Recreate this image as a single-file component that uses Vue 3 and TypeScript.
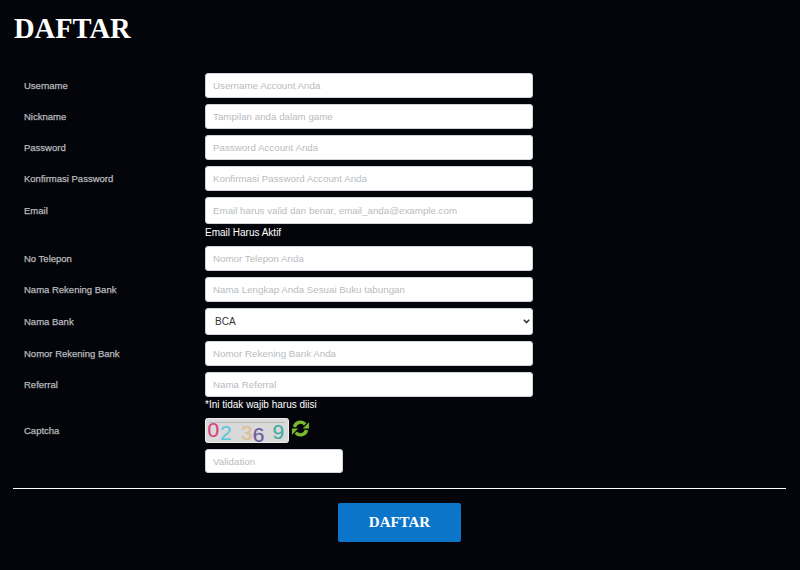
<script setup lang="ts">
import { ref } from "vue";

type Row = { label: string; placeholder: string; note?: string; tall?: boolean };

const topRows: Row[] = [
  { label: "Username", placeholder: "Username Account Anda" },
  { label: "Nickname", placeholder: "Tampilan anda dalam game" },
  { label: "Password", placeholder: "Password Account Anda" },
  { label: "Konfirmasi Password", placeholder: "Konfirmasi Password Account Anda" },
  { label: "Email", placeholder: "Email harus valid dan benar, email_anda@example.com", note: "Email Harus Aktif", tall: true },
  { label: "No Telepon", placeholder: "Nomor Telepon Anda" },
  { label: "Nama Rekening Bank", placeholder: "Nama Lengkap Anda Sesuai Buku tabungan" },
];

const bottomRows: Row[] = [
  { label: "Nomor Rekening Bank", placeholder: "Nomor Rekening Bank Anda" },
  { label: "Referral", placeholder: "Nama Referral", note: "*Ini tidak wajib harus diisi" },
];

const bank = ref("BCA");
const banks = ["BCA", "BNI", "BRI", "MANDIRI"];

const digits = [
  { ch: "0", x: 2.5, y: 19, color: "#d8427f" },
  { ch: "2", x: 15, y: 22, color: "#5fc6dd" },
  { ch: "3", x: 36, y: 22, color: "#dcc193" },
  { ch: "6", x: 47.8, y: 24, color: "#6f5a9c" },
  { ch: "9", x: 67.5, y: 21, color: "#42aca3" },
];
</script>

<template>
  <div class="page">
    <h1 class="title">DAFTAR</h1>

    <form class="form" @submit.prevent>
      <div v-for="row in topRows" :key="row.label" class="row">
        <label class="label" :class="{ 'label-tall': row.tall }">{{ row.label }}</label>
        <div class="field">
          <input class="input" :class="{ 'input-tall': row.tall }" type="text" :placeholder="row.placeholder" />
          <p v-if="row.note" class="note note-email">{{ row.note }}</p>
        </div>
      </div>

      <div class="row">
        <label class="label label-tall">Nama Bank</label>
        <div class="field select-wrap">
          <select v-model="bank" class="input input-tall select">
            <option v-for="b in banks" :key="b">{{ b }}</option>
          </select>
          <!-- native arrow is too big at this size -->
          <svg class="chevron" width="7" height="5" viewBox="0 0 7 5" fill="none">
            <path d="M0.8 0.8L3.5 3.6L6.2 0.8" stroke="#333" stroke-width="1.5" />
          </svg>
        </div>
      </div>

      <div v-for="row in bottomRows" :key="row.label" class="row">
        <label class="label">{{ row.label }}</label>
        <div class="field">
          <input class="input" type="text" :placeholder="row.placeholder" />
          <p v-if="row.note" class="note">{{ row.note }}</p>
        </div>
      </div>

      <div class="row row-captcha">
        <label class="label">Captcha</label>
        <div class="field captcha">
          <svg class="captcha-img" width="84" height="25" viewBox="0 0 84 25">
            <rect x="0.5" y="0.5" width="83" height="24" rx="2" fill="#d9d9d9" stroke="#eee" />
            <path d="M4 4.5H80" stroke="#a9a9a9" stroke-width="0.7" />
            <text
              v-for="d in digits"
              :key="d.ch"
              :x="d.x"
              :y="d.y"
              :fill="d.color"
              :stroke="d.color"
              class="captcha-digit"
            >{{ d.ch }}</text>
          </svg>
          <svg class="refresh" width="19" height="19" viewBox="0 0 20 20" fill="none">
            <path d="M3.6 8.4A6.6 6.6 0 0 1 15 5.6" stroke="#7cb82c" stroke-width="3.6" />
            <path d="M19 3.4V10H12.4Z" fill="#7cb82c" />
            <path d="M16.4 11.6A6.6 6.6 0 0 1 5 14.4" stroke="#7cb82c" stroke-width="3.6" />
            <path d="M1 16.6V10H7.6Z" fill="#7cb82c" />
          </svg>
        </div>
      </div>

      <div class="row">
        <span class="label"></span>
        <div class="field">
          <input class="input input-short" type="text" placeholder="Validation" />
        </div>
      </div>

      <hr class="divider" />

      <div class="actions">
        <button class="submit" type="submit">DAFTAR</button>
      </div>
    </form>
  </div>
</template>

<style>
html,
body {
  margin: 0;
  background: #04050a;
}
</style>

<style scoped>
.page {
  box-sizing: border-box;
  height: 570px;
  padding: 12px 14px 0 13px;
  background: #04050a;
  font-family: "Liberation Sans", Arial, sans-serif;
  overflow: hidden;
}

.title {
  margin: 0 0 26px 1px;
  font-family: "Liberation Serif", "Times New Roman", serif;
  font-size: 28.5px;
  line-height: 33px;
  font-weight: 700;
  color: #fff;
}

.form {
  margin-top: 28px;
}

.row {
  display: flex;
  margin-bottom: 6px;
}

.label {
  flex: 0 0 192px;
  box-sizing: border-box;
  height: 25px;
  padding-left: 11px;
  font-size: 9.5px;
  font-weight: 400;
  line-height: 25px;
  color: #b8babe;
  -webkit-text-stroke: 0.25px #b8babe;
}

.label-tall {
  height: 27px;
  line-height: 27px;
}

.field {
  width: 328px;
}

.input {
  display: block;
  box-sizing: border-box;
  width: 100%;
  height: 25px;
  padding: 0 7px;
  border: 1px solid #ced4da;
  border-radius: 3px;
  background: #fff;
  font-family: inherit;
  font-size: 9.75px;
  color: #333;
  outline: none;
}

.input::placeholder {
  color: #b9bcc0;
  opacity: 1;
}

.input-tall {
  height: 27px;
}

.select-wrap {
  position: relative;
}

.select {
  appearance: none;
  font-size: 10px;
  padding-left: 9px;
}

.chevron {
  position: absolute;
  top: 11px;
  right: 3px;
  pointer-events: none;
}

.input-short {
  width: 138px;
  height: 24px;
}

.note {
  margin: 0;
  padding-top: 1px;
  font-size: 10px;
  line-height: 13px;
  color: #fff;
}

.note-email {
  margin: 1px 0 1px;
}

.row-captcha {
  padding-top: 1px;
}

.captcha {
  display: flex;
  align-items: flex-start;
  gap: 2px;
}

.captcha-img {
  overflow: visible;
}

.captcha-digit {
  font-family: "Liberation Sans", sans-serif;
  font-size: 21px;
  stroke-width: 0.2px;
}

.refresh {
  flex-shrink: 0;
  margin-top: 1px;
}

.divider {
  margin: 14px 0 14px;
  border: 0;
  border-top: 1px solid #fff;
}

.actions {
  display: flex;
  justify-content: center;
}

.submit {
  width: 123px;
  height: 39px;
  border: 0;
  border-radius: 2px;
  background: #0a75c9;
  color: #fff;
  font-family: "Liberation Serif", "Times New Roman", serif;
  font-size: 15px;
  font-weight: 700;
}
</style>
